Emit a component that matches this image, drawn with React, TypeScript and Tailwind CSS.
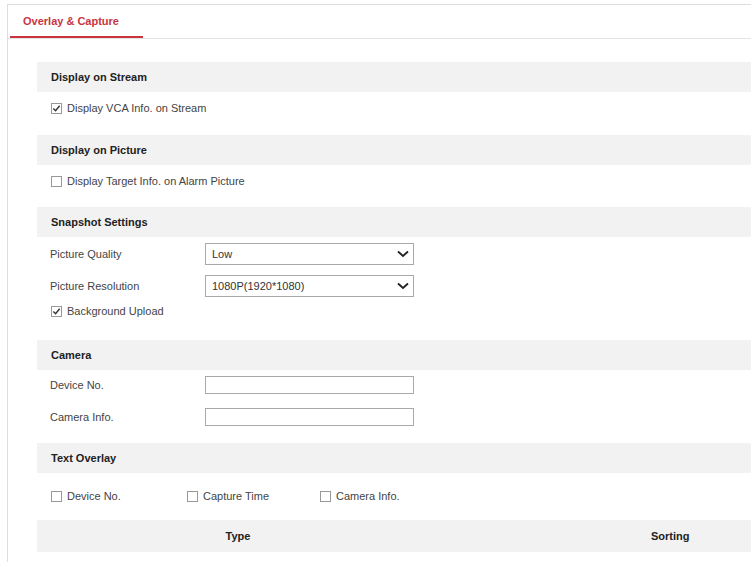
const font = { fontFamily: '"Liberation Sans", Arial, sans-serif' };

function Header({ title }: { title: string }) {
  return (
    <div className="flex h-[30px] items-center bg-[#f2f2f2] pl-[14px] text-[11px] font-bold text-[#222]">
      {title}
    </div>
  );
}

function Check({ label, checked, className }: { label: string; checked?: boolean; className?: string }) {
  return (
    <label className={`flex items-center gap-[5px] text-[11px] text-[#444] ${className ?? ""}`}>
      <span className="flex h-[11px] w-[11px] items-center justify-center border border-[#999] bg-white">
        {checked && (
          <svg viewBox="0 0 10 10" className="h-[9px] w-[9px]">
            <path d="M1.5 5 L4 7.5 L8.5 2" fill="none" stroke="#333" strokeWidth="1.6" />
          </svg>
        )}
      </span>
      {label}
    </label>
  );
}

function Select({ value }: { value: string }) {
  return (
    <div className="flex h-[22px] w-[209px] items-center justify-between border border-[#aaa] bg-white pl-[6px] pr-[4px] text-[11px] text-[#333]">
      {value}
      <svg viewBox="0 0 12 8" className="h-[8px] w-[12px]">
        <path d="M1 1.5 L6 6 L11 1.5" fill="none" stroke="#222" strokeWidth="1.8" />
      </svg>
    </div>
  );
}

function Row({ label, children }: { label: string; children: React.ReactNode }) {
  return (
    <div className="flex items-center pl-[13px] text-[11px] text-[#444]">
      <span className="w-[155px]">{label}</span>
      {children}
    </div>
  );
}

export default function App() {
  return (
    <div style={font} className="h-[562px] w-[751px] overflow-hidden bg-white pl-[7px] pt-[4px]">
      <div className="h-full border-l border-t border-[#ddd]">
        <div className="flex h-[34px] items-end border-b border-[#e4e4e4]">
          <div className="ml-[2px] w-[133px] border-b-2 border-[#c8353f] pb-[7px] pl-[13px] text-[11px] font-bold text-[#c8353f]">
            Overlay &amp; Capture
          </div>
        </div>
        <div className="ml-[29px] pt-[23px]">
          <Header title="Display on Stream" />
          <div className="flex h-[32px] items-center pl-[14px]">
            <Check label="Display VCA Info. on Stream" checked />
          </div>
          <div className="h-[11px]" />
          <Header title="Display on Picture" />
          <div className="flex h-[32px] items-center pl-[14px]">
            <Check label="Display Target Info. on Alarm Picture" />
          </div>
          <div className="h-[10px]" />
          <Header title="Snapshot Settings" />
          <div className="flex flex-col gap-[10px] pt-[6px]">
            <Row label="Picture Quality"><Select value="Low" /></Row>
            <Row label="Picture Resolution"><Select value="1080P(1920*1080)" /></Row>
          </div>
          <div className="flex h-[28px] items-center pl-[14px]">
            <Check label="Background Upload" checked />
          </div>
          <div className="h-[15px]" />
          <Header title="Camera" />
          <div className="flex flex-col gap-[14px] pt-[6px]">
            <Row label="Device No."><div className="h-[18px] w-[209px] border border-[#aaa]" /></Row>
            <Row label="Camera Info."><div className="h-[18px] w-[209px] border border-[#aaa]" /></Row>
          </div>
          <div className="h-[17px]" />
          <Header title="Text Overlay" />
          <div className="flex h-[47px] items-center pl-[14px]">
            <Check label="Device No." className="w-[136px]" />
            <Check label="Capture Time" className="w-[133px]" />
            <Check label="Camera Info." />
          </div>
          <div className="flex h-[32px] items-center bg-[#f2f2f2] text-[11px] font-bold text-[#222]">
            <span className="w-[402px] text-center">Type</span>
            <span className="ml-[212px]">Sorting</span>
          </div>
        </div>
      </div>
    </div>
  );
}
